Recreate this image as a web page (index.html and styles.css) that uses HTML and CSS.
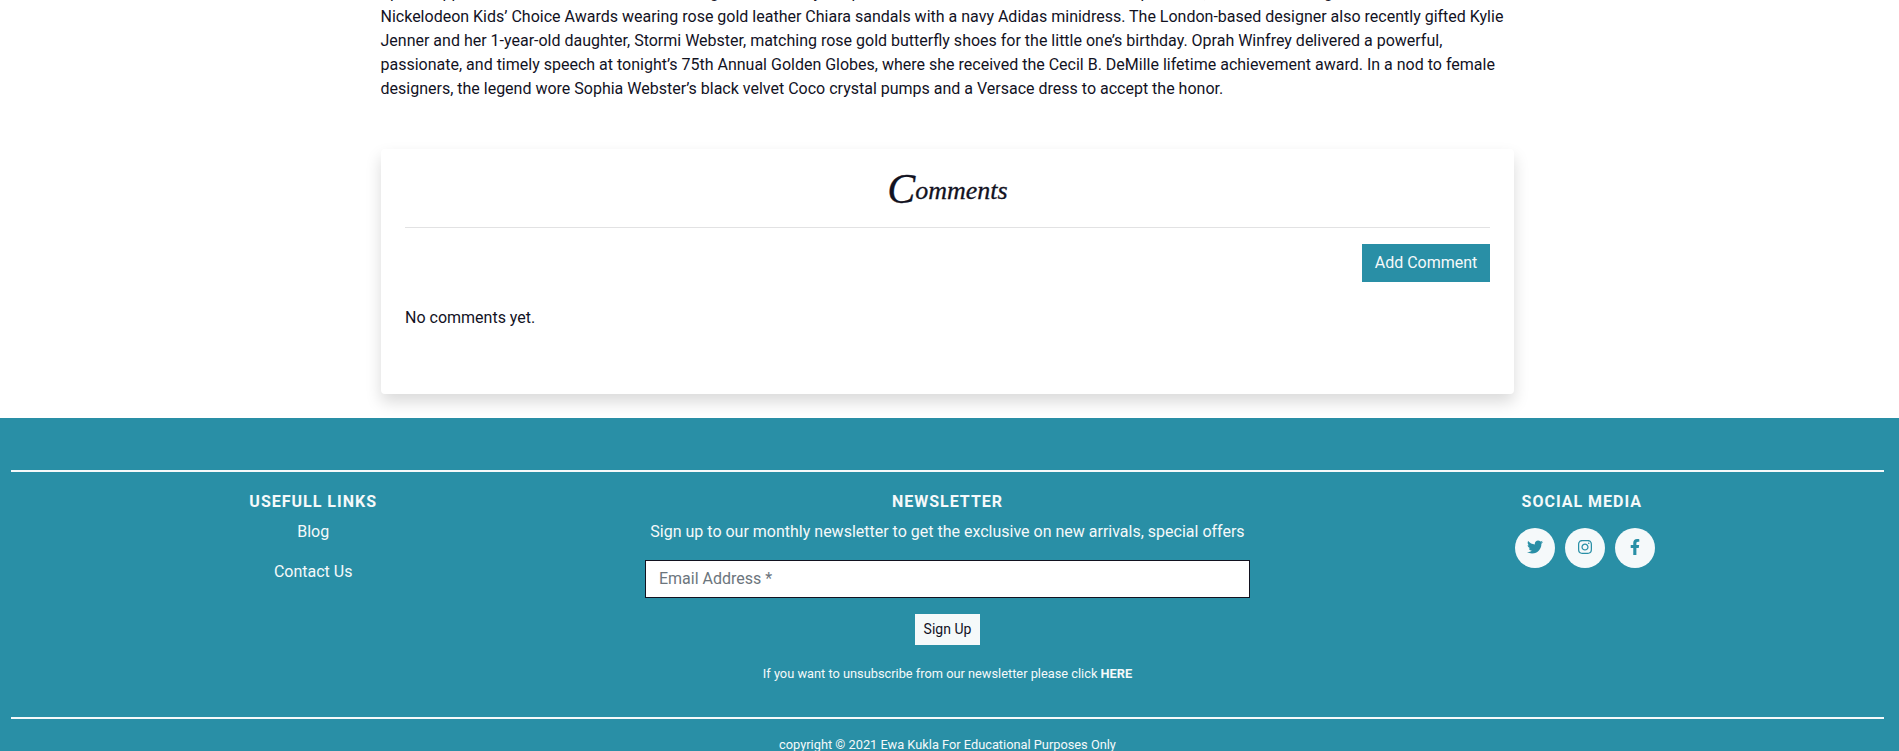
FILE: index.html
```html
<!DOCTYPE html>
<html lang="en">
<head>
<meta charset="utf-8">
<title>Blog post</title>
<link rel="stylesheet" href="styles.css">
</head>
<body>
<main class="page">
  <article class="post">
    <p>Spears appeared in the brand’s rose and silver gold sandals by the panel and other celebrities at the show’s premiere, and then the singer</p>
    <p>Nickelodeon Kids’ Choice Awards wearing rose gold leather Chiara sandals with a navy Adidas minidress. The London-based designer also recently gifted Kylie Jenner and her 1-year-old daughter, Stormi Webster, matching rose gold butterfly shoes for the little one’s birthday. Oprah Winfrey delivered a powerful, passionate, and timely speech at tonight’s 75th Annual Golden Globes, where she received the Cecil B. DeMille lifetime achievement award. In a nod to female designers, the legend wore Sophia Webster’s black velvet Coco crystal pumps and a Versace dress to accept the honor.</p>
  </article>
  <section class="comments">
    <h3 class="comments-title">Comments</h3>
    <div class="comments-actions"><button class="btn-add">Add Comment</button></div>
    <p class="comments-empty">No comments yet.</p>
  </section>
</main>
<footer class="footer">
  <hr class="rule">
  <div class="columns">
    <div class="col">
      <h6 class="heading">Usefull Links</h6>
      <a class="link">Blog</a>
      <a class="link">Contact Us</a>
    </div>
    <div class="col">
      <h6 class="heading">Newsletter</h6>
      <p class="lead">Sign up to our monthly newsletter to get the exclusive on new arrivals, special offers</p>
      <input class="email" type="email" placeholder="Email Address *">
      <button class="btn-sign">Sign Up</button>
      <p class="small">If you want to unsubscribe from our newsletter please click <b>HERE</b></p>
    </div>
    <div class="col">
      <h6 class="heading">Social Media</h6>
      <div class="social">
        <a class="dot"><svg width="16" height="16" viewBox="0 0 512 512"><path d="M459.37 151.716c.325 4.548.325 9.097.325 13.645 0 138.72-105.583 298.558-298.558 298.558-59.452 0-114.68-17.219-161.137-47.106 8.447.974 16.568 1.299 25.34 1.299 49.055 0 94.213-16.568 130.274-44.832-46.132-.975-84.792-31.188-98.112-72.772 6.498.974 12.995 1.624 19.818 1.624 9.421 0 18.843-1.3 27.614-3.573-48.081-9.747-84.143-51.98-84.143-102.985v-1.299c13.969 7.797 30.214 12.67 47.431 13.319-28.264-18.843-46.781-51.005-46.781-87.391 0-19.492 5.197-37.36 14.294-52.954 51.655 63.675 129.3 105.258 216.365 109.807-1.624-7.797-2.599-15.918-2.599-24.04 0-57.828 46.782-104.934 104.934-104.934 30.213 0 57.502 12.67 76.67 33.137 23.715-4.548 46.456-13.32 66.599-25.34-7.798 24.366-24.366 44.833-46.132 57.827 21.117-2.273 41.584-8.122 60.426-16.243-14.292 20.791-32.161 39.308-52.628 54.253z"/></svg></a>
        <a class="dot"><svg width="14" height="16" viewBox="0 0 448 512"><path d="M224.1 141c-63.6 0-114.9 51.3-114.9 114.9s51.3 114.9 114.9 114.9S339 319.5 339 255.900 287.700 141 224.100 141zm0 189.600c-41.100 0-74.700-33.500-74.700-74.700s33.500-74.700 74.700-74.700 74.700 33.500 74.700 74.700-33.600 74.700-74.700 74.700zm146.400-194.300c0 14.900-12 26.800-26.800 26.800-14.900 0-26.800-12-26.800-26.800s12-26.800 26.800-26.800 26.800 12 26.800 26.800zm76.100 27.200c-1.700-35.900-9.900-67.700-36.200-93.900-26.200-26.200-58-34.400-93.900-36.200-37-2.100-147.900-2.100-184.900 0-35.800 1.700-67.600 9.900-93.900 36.100s-34.400 58-36.200 93.900c-2.100 37-2.100 147.900 0 184.900 1.700 35.900 9.900 67.700 36.200 93.900s58 34.400 93.900 36.200c37 2.100 147.900 2.100 184.900 0 35.900-1.700 67.700-9.900 93.900-36.200 26.200-26.200 34.400-58 36.200-93.900 2.100-37 2.100-147.800 0-184.800zM398.800 388c-7.800 19.600-22.900 34.700-42.600 42.600-29.500 11.700-99.500 9-132.100 9s-102.700 2.600-132.100-9c-19.600-7.800-34.700-22.900-42.600-42.600-11.700-29.500-9-99.500-9-132.100s-2.600-102.700 9-132.100c7.800-19.600 22.900-34.700 42.600-42.600 29.500-11.700 99.500-9 132.100-9s102.700-2.600 132.100 9c19.600 7.800 34.700 22.900 42.600 42.600 11.700 29.500 9 99.500 9 132.100s2.700 102.700-9 132.100z"/></svg></a>
        <a class="dot"><svg width="10" height="16" viewBox="0 0 320 512"><path d="M279.140 288l14.220-92.660h-88.910v-60.130c0-25.350 12.420-50.060 52.240-50.060h40.420V6.260S260.430 0 225.360 0c-73.220 0-121.080 44.380-121.080 124.720v70.620H22.890V288h81.390v224h100.170V288z"/></svg></a>
      </div>
    </div>
  </div>
  <hr class="rule">
  <p class="copyright">copyright © 2021 Ewa Kukla For Educational Purposes Only</p>
</footer>
</body>
</html>
```
FILE: styles.css
```css
* { box-sizing: border-box; }
html { overflow: hidden; }
body {
  margin: 0;
  height: 751px;
  overflow: hidden;
  background: #fff;
  color: #12121f;
  font: 400 16px/24px Roboto, "Liberation Sans", sans-serif;
}
p, h3, h6 { margin: 0; }
.page { width: 1133px; margin: 0 0 0 381px; }
.post { margin: -19px 0 0 -0.5px; }
.comments {
  margin: 48px 0 24px;
  height: 245px;
  padding: 24px;
  border-radius: 4px;
  background: #fff;
  box-shadow: 0 8px 16px rgba(0, 0, 0, .15);
}
.comments-title {
  height: 55px;
  border-bottom: 1px solid #e2e2e3;
  text-align: center;
  font: italic 400 26px/36px "Liberation Serif", serif;
  -webkit-text-stroke: .3px;
}
.comments-title::first-letter { font-size: 42px; line-height: 0; vertical-align: -4px; }
.comments-actions { display: flex; justify-content: flex-end; padding: 16px 0 24px; }
button { border: 0; border-radius: 0; font-family: inherit; }
.btn-add {
  width: 128px;
  height: 38px;
  padding: 0 0 1px;
  background: #298fa6;
  color: #f5f9fa;
  font-size: 16px;
}
.footer {
  width: 1899px;
  height: 333px;
  padding: 52px 15px 0 11px;
  background: #298fa6;
  color: #f5f9fa;
}
.rule { height: 2px; margin: 0; border: 0; background: #f5f9fa; }
.columns { display: grid; grid-template-columns: repeat(3, 1fr); height: 245px; margin: 0 -15px; padding-top: 18px; }
.col { display: flex; flex-direction: column; align-items: center; text-align: center; }
.heading { margin-bottom: 6px; font-size: 16px; line-height: 24px; font-weight: 700; letter-spacing: 1px; text-transform: uppercase; }
.link { margin-bottom: 16px; }
.email {
  width: 605px;
  height: 38px;
  margin: 16px 0 16px;
  padding: 0 12px 2px 13px;
  border: 1px solid #12121f;
  border-radius: 0;
  background: #fff;
  font: 400 16px/24px Roboto, sans-serif;
}
.email::placeholder { color: #6c757d; opacity: 1; }
.btn-sign { width: 65px; height: 31px; padding: 0 0 1px; background: #f5f9fa; color: #12121f; font-size: 14px; }
.small { margin-top: 17px; font-size: 12.8px; }
.social { display: flex; gap: 10px; margin: 8px 0 0 6px; }
.dot { display: grid; place-items: center; width: 40px; height: 40px; padding-bottom: 2px; border-radius: 50%; background: #f5f9fa; }
.dot svg { fill: #298fa6; }
.copyright { padding-top: 14px; text-align: center; font-size: 12.8px; }
```
